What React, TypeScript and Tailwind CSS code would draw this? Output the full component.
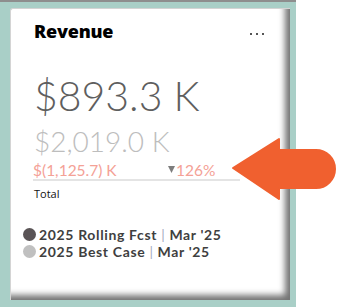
import React from "react";

export default function App() {
  return (
    <div className="relative w-[337px] h-[307px] bg-white overflow-hidden" style={{ fontFamily: "Lato, 'Open Sans', sans-serif" }}>
      <div className="w-[296px] h-[307px] bg-[#a9cfc7] border-t-2 border-[#8e8e8e] pl-[10px] pr-[6px] pt-[6px] pb-[7px]">
        <div className="h-full bg-white rounded-tl-[3px] border-l border-t border-[#d4d4d4] shadow-[inset_-8px_-8px_6px_-3px_rgba(0,0,0,0.55)] flex flex-col pl-[12px]">
          <div className="flex items-center justify-between mt-[12px] ml-[11px] mr-[26px] h-[20px]">
            <span className="text-[18px] leading-[20px] font-extrabold text-black tracking-[-0.2px]" style={{ fontFamily: "'Open Sans', Lato, sans-serif" }}>Revenue</span>
            <span className="flex gap-[4px] items-center mt-[6px]">
              <span className="w-[2px] h-[2px] bg-[#555]" />
              <span className="w-[2px] h-[2px] bg-[#555]" />
              <span className="w-[2px] h-[2px] bg-[#555]" />
            </span>
          </div>
          <div className="ml-[11px] mt-[34px] text-[41px] leading-[41px] font-light text-[#5e5e5e] whitespace-nowrap">$893.3 K</div>
          <div className="ml-[11px] mt-[11px] text-[28px] leading-[28px] font-light text-[#bdbdbd] whitespace-nowrap">$2,019.0 K</div>
          <div className="ml-[10px] mt-[8px] w-[207px] grid grid-cols-[135px_auto] text-[15.5px] leading-[15px] text-[#f4a196]">
            <span className="whitespace-nowrap">$(1,125.7) K</span>
            <span className="flex items-start whitespace-nowrap">
              <svg width="7" height="7" viewBox="0 0 7 7" className="mt-[3px] mr-[1px]">
                <path d="M0,0 L7,0 L3.5,7 Z" fill="#7d7d7d" />
              </svg>
              126%
            </span>
          </div>
          <div className="ml-[10px] mt-[1px] w-[207px] h-[2px] bg-[#e4e4e4]" />
          <div className="ml-[11px] mt-[7px] text-[11px] leading-[11px] text-[#111]" style={{ fontFamily: "'Open Sans', Lato, sans-serif" }}>Total</div>
          <div className="mt-[27px] flex flex-col text-[14px] leading-[17px] font-bold tracking-[0.65px] text-[#3f3f3f]">
            <div className="flex items-center gap-[3px] whitespace-nowrap h-[17px]">
              <span className="w-[13px] h-[13px] rounded-full bg-[#5a5456]" />
              <span>2025 Rolling Fcst <span className="text-[#a3acbd] font-normal">|</span> Mar '25</span>
            </div>
            <div className="flex items-center gap-[3px] whitespace-nowrap h-[17px]">
              <span className="w-[13px] h-[13px] rounded-full bg-[#c0c0c0]" />
              <span>2025 Best Case <span className="text-[#a3acbd] font-normal">|</span> Mar '25</span>
            </div>
          </div>
        </div>
      </div>
      <svg className="absolute left-0 top-0 pointer-events-none" width="337" height="307" viewBox="0 0 337 307">
        <path d="M233,168 L279,139 L279,150 L316,150 A19,19 0 0 1 316,188 L279,188 L279,199 Z" fill="#f0602f" stroke="#f0602f" strokeWidth="2" strokeLinejoin="round" />
      </svg>
    </div>
  );
}
